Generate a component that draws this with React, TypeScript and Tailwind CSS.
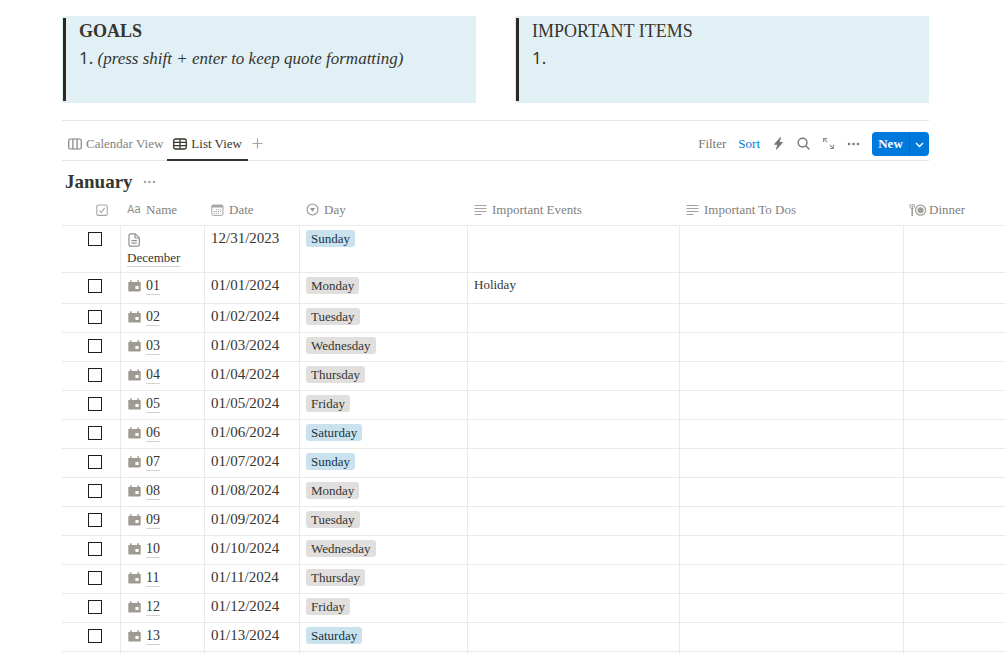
import type { ReactNode } from "react"
import clsx from "clsx"

interface DayEntry {
  name: string
  date: string
  day: string
  event?: string
}

const entries: DayEntry[] = [
  { name: "December", date: "12/31/2023", day: "Sunday" },
  { name: "01", date: "01/01/2024", day: "Monday", event: "Holiday" },
  { name: "02", date: "01/02/2024", day: "Tuesday" },
  { name: "03", date: "01/03/2024", day: "Wednesday" },
  { name: "04", date: "01/04/2024", day: "Thursday" },
  { name: "05", date: "01/05/2024", day: "Friday" },
  { name: "06", date: "01/06/2024", day: "Saturday" },
  { name: "07", date: "01/07/2024", day: "Sunday" },
  { name: "08", date: "01/08/2024", day: "Monday" },
  { name: "09", date: "01/09/2024", day: "Tuesday" },
  { name: "10", date: "01/10/2024", day: "Wednesday" },
  { name: "11", date: "01/11/2024", day: "Thursday" },
  { name: "12", date: "01/12/2024", day: "Friday" },
  { name: "13", date: "01/13/2024", day: "Saturday" },
]

export default function App() {
  return (
    <main className="h-screen overflow-hidden bg-white pl-[62px] pt-4 font-['Liberation_Serif',serif] text-[13px] text-[#37352f]">
      <div className="mr-[76px] grid grid-cols-2 gap-[39px]">
        <Quote title={<strong>GOALS</strong>}>
          <em>(press shift + enter to keep quote formatting)</em>
        </Quote>
        <Quote title="IMPORTANT ITEMS" />
      </div>
      <hr className="mr-[76px] mt-[17px] border-[#e6e6e4]" />
      <Toolbar />
      <div className="flex h-[35px] items-center gap-2.5 pl-[3px] pt-1.5">
        <h2 className="text-[19px] font-bold leading-6">January</h2>
        <button aria-label="Group options" className="text-[#a5a4a0]">
          <DotsIcon />
        </button>
      </div>
      <DayTable />
    </main>
  )
}

function Quote({ title, children }: { title: ReactNode; children?: ReactNode }) {
  return (
    <section className="bg-[#e1f0f5] py-0.5 pl-px">
      <blockquote className="border-l-[3px] border-[#2b2723] pb-0.5 pl-[13px] leading-[27px]">
        <p className="text-[18px]">{title}</p>
        <p className="mb-[27px] h-[27px] text-[17px]">
          <span className="font-['Noto_Sans',sans-serif] leading-none">1.</span> {children}
        </p>
      </blockquote>
    </section>
  )
}

function Toolbar() {
  return (
    <div className="mr-[76px] flex h-10 items-stretch justify-between border-b border-[#e6e6e4]">
      <div className="flex items-stretch">
        <button className="flex items-center gap-1 pl-1.5 pr-1 pt-1.5 text-[#82817d]">
          <BoardIcon />
          Calendar View
        </button>
        <button className="-mb-px flex items-center gap-1 border-b-2 border-[#37352f] px-1.5 pt-2">
          <GridIcon />
          List View
        </button>
        <button aria-label="Add view" className="px-1 pt-1.5 text-[#a5a4a0]">
          <svg width="11" height="11" viewBox="0 0 11 11" stroke="currentColor" strokeWidth="1.2">
            <path d="M5.5 0.5v10M0.5 5.5h10" />
          </svg>
        </button>
      </div>
      <div className="flex items-center gap-3 pt-1.5 text-[#787774]">
        <button>Filter</button>
        <button className="text-[#0079dc]">Sort</button>
        <button aria-label="Automations">
          <svg width="13" height="13" viewBox="0 0 13 13" fill="currentColor">
            <path d="M8.2 0.3 2.3 7.1c-.3.3 0 .7.3.7h2.8L3.9 12.2c-.1.5.5.8.8.4l6-6.9c.3-.3.1-.7-.3-.7H7.7L9 .8c.2-.5-.4-.9-.8-.5Z" />
          </svg>
        </button>
        <button aria-label="Search">
          <svg width="13" height="13" viewBox="0 0 13 13" fill="none" stroke="currentColor" strokeWidth="1.4" strokeLinecap="round">
            <circle cx="5.6" cy="5.6" r="4.4" />
            <path d="m9 9 3 3" />
          </svg>
        </button>
        <button aria-label="Open full page" className="text-[#91918e]">
          <svg width="13" height="13" viewBox="0 0 13 13" fill="none" stroke="currentColor" strokeWidth="1.1">
            <path d="M1.5 5V1.5H5M1.5 1.5 5.2 5.2M11.5 8v3.5H8M11.5 11.5 7.8 7.8" />
          </svg>
        </button>
        <button aria-label="More">
          <DotsIcon />
        </button>
        <div className="flex h-6 overflow-hidden rounded-sm bg-[#0079dc] text-white">
          <button className="w-[38px] border-r border-[#0869ba] font-bold">New</button>
          <button aria-label="New options" className="flex w-[19px] items-center justify-center pt-0.5">
            <svg width="9" height="6" viewBox="0 0 9 6" fill="none" stroke="currentColor" strokeWidth="1.4">
              <path d="m1 1 3.5 3.5L8 1" />
            </svg>
          </button>
        </div>
      </div>
    </div>
  )
}

function DayTable() {
  return (
    <table className="w-full table-fixed border-separate border-spacing-0">
      <colgroup>
        <col className="w-[59px]" />
        <col className="w-[84px]" />
        <col className="w-[95px]" />
        <col className="w-[168px]" />
        <col className="w-[212px]" />
        <col className="w-[224px]" />
        <col />
      </colgroup>
      <thead>
        <tr className="h-[30px] text-left text-[#82817d]">
          <HeaderCell>
            <span className="flex w-full justify-end pr-[13px]">
              <CheckIcon />
            </span>
          </HeaderCell>
          <HeaderCell>
            <span aria-hidden="true" className="w-3.5 font-['Inter',sans-serif] text-[11px] text-[#91918e]">
              Aa
            </span>
            Name
          </HeaderCell>
          <HeaderCell>
            <CalendarIcon />
            Date
          </HeaderCell>
          <HeaderCell>
            <SelectIcon />
            Day
          </HeaderCell>
          <HeaderCell>
            <TextIcon />
            Important Events
          </HeaderCell>
          <HeaderCell>
            <TextIcon />
            Important To Dos
          </HeaderCell>
          <th className="border-b border-[#e9e9e7] p-0 font-normal">
            <span className="flex items-center gap-0.5 pb-0.5 pl-[5px]">
              <PlateIcon />
              Dinner
            </span>
          </th>
        </tr>
      </thead>
      <tbody>
        {entries.map((entry, index) => (
          <DayRow key={entry.date} entry={entry} index={index} />
        ))}
        <tr className="h-[29px]">
          {Array.from({ length: 7 }).map((_, i) => (
            <td key={i} className="border-r border-[#e9e9e7] last:border-r-0" />
          ))}
        </tr>
      </tbody>
    </table>
  )
}

function HeaderCell({ children }: { children: ReactNode }) {
  return (
    <th className="border-b border-[#e9e9e7] p-0 font-normal">
      <span className="flex items-center gap-[5px] pb-0.5 pl-1.5">{children}</span>
    </th>
  )
}

const cell = "border-b border-r border-[#e9e9e7] px-1.5 pt-0.5 pb-0 align-top leading-5 last:border-r-0"

function DayRow({ entry, index }: { entry: DayEntry; index: number }) {
  const weekend = entry.day === "Saturday" || entry.day === "Sunday"

  return (
    <tr className={index === 0 ? "h-[47px]" : index === 1 ? "h-[31px]" : "h-[29px]"}>
      <td className={cell}>
        <input
          type="checkbox"
          aria-label={`Done ${entry.date}`}
          className="ml-5 mt-1 block size-3.5 appearance-none border border-[#1f1d1a] checked:bg-[#0079dc]"
        />
      </td>
      <td className={cell}>
        {index === 0 ? (
          <a href="#december" className="block">
            <span className="flex h-5 items-center pl-px pt-1">
              <PageIcon />
            </span>
            <span className="underline decoration-[#d3d2cf] decoration-1 underline-offset-4">{entry.name}</span>
          </a>
        ) : (
          <a href={`#day-${entry.name}`} className="flex items-center gap-[5px] pl-px pt-px">
            <BlockCalendarIcon />
            <span className="text-[14px] underline decoration-[#d3d2cf] decoration-1 underline-offset-4">{entry.name}</span>
          </a>
        )}
      </td>
      <td className={clsx(cell, "text-[15px]")}>{entry.date}</td>
      <td className={cell}>
        <span
          className={clsx(
            "mt-0.5 block w-fit rounded-[3px] px-[5px] text-[13px] leading-[17px]",
            weekend ? "bg-[#cae2ee] text-[#183347]" : "bg-[#e1dfdd]",
          )}
        >
          {entry.day}
        </span>
      </td>
      <td className={cell}>{entry.event}</td>
      <td className={cell} />
      <td className={cell} />
    </tr>
  )
}

function DotsIcon() {
  return (
    <svg width="13" height="13" viewBox="0 0 13 13" fill="currentColor">
      <circle cx="2" cy="7" r="1.3" />
      <circle cx="6.5" cy="7" r="1.3" />
      <circle cx="11" cy="7" r="1.3" />
    </svg>
  )
}

function BoardIcon() {
  return (
    <svg width="14" height="12" viewBox="0 0 14 12" fill="none" stroke="currentColor" strokeWidth="1.2">
      <rect x="0.7" y="1" width="12.6" height="10" rx="1.8" />
      <path d="M4.9 1v10M9.1 1v10" />
    </svg>
  )
}

function GridIcon() {
  return (
    <svg width="14" height="12" viewBox="0 0 14 12" fill="none" stroke="currentColor" strokeWidth="1.3">
      <rect x="0.7" y="1" width="12.6" height="10" rx="1.8" />
      <path d="M7 1v10M0.7 4.3h12.6M0.7 7.6h12.6" />
    </svg>
  )
}

function CheckIcon() {
  return (
    <svg width="12" height="12" viewBox="0 0 12 12" fill="none" stroke="#a5a4a0" strokeWidth="1.1">
      <rect x="0.8" y="1" width="10.4" height="10.4" rx="1.5" />
      <path d="m3.4 6.4 1.9 1.9 3.4-4.4" />
    </svg>
  )
}

function CalendarIcon() {
  return (
    <svg width="13" height="12" viewBox="0 0 13 12" fill="none" stroke="#a5a4a0">
      <rect x="0.8" y="1" width="11.2" height="10.4" rx="1.6" />
      <path d="M0.8 2.3h11.2" strokeWidth="2.4" />
      <path d="M5 5.7h5.4M2.6 7.5h7.8M2.6 9.3h5.4" strokeDasharray="1.2 0.9" />
    </svg>
  )
}

function SelectIcon() {
  return (
    <svg width="13" height="13" viewBox="0 0 13 13">
      <circle cx="6.5" cy="6.5" r="5.5" fill="none" stroke="#91918e" strokeWidth="1.1" />
      <path d="M4 5h5L6.5 8.8Z" fill="#91918e" />
    </svg>
  )
}

function TextIcon() {
  return (
    <svg width="13" height="12" viewBox="0 0 13 12" stroke="#a5a4a0" strokeWidth="1.1">
      <path d="M0.5 1.5h12M0.5 4.5h12M0.5 7.5h12M0.5 10.5h7" />
    </svg>
  )
}

function PlateIcon() {
  return (
    <svg width="18" height="14" viewBox="0 0 18 14" fill="none" stroke="#a09f9b">
      <path d="M1.2 1v3.6c0 1.2 4 1.2 4 0V1M3.2 1v5" strokeWidth="1" />
      <path d="M3.2 5v8" strokeWidth="1.6" />
      <circle cx="11.6" cy="7.2" r="5" strokeWidth="1.3" />
      <circle cx="11.6" cy="7.2" r="3" fill="#a09f9b" stroke="none" />
    </svg>
  )
}

function PageIcon() {
  return (
    <svg width="13" height="14" viewBox="0 0 13 14" fill="none" stroke="#91918e" strokeWidth="1.2" strokeLinejoin="round">
      <path d="M2.7 0.8h4.6l4 4v6.7c0 1-.7 1.7-1.7 1.7H2.7c-1 0-1.7-.7-1.7-1.7V2.5c0-1 .7-1.7 1.7-1.7Z" />
      <path d="M7 1v4h4.2M3.4 7.6h5.4M3.4 10.2h5.4" />
    </svg>
  )
}

function BlockCalendarIcon() {
  return (
    <svg width="13" height="12" viewBox="0 0 13 12">
      <path d="M0.3 2h1.8V0.3h1.5V2h5.8V0.3h1.5V2h1.8v8.6c0 .6-.4 1-1 1H1.3c-.6 0-1-.4-1-1Z" fill="#9f9a92" />
      <rect x="7.4" y="6" width="3.2" height="3" fill="#fff" />
    </svg>
  )
}
